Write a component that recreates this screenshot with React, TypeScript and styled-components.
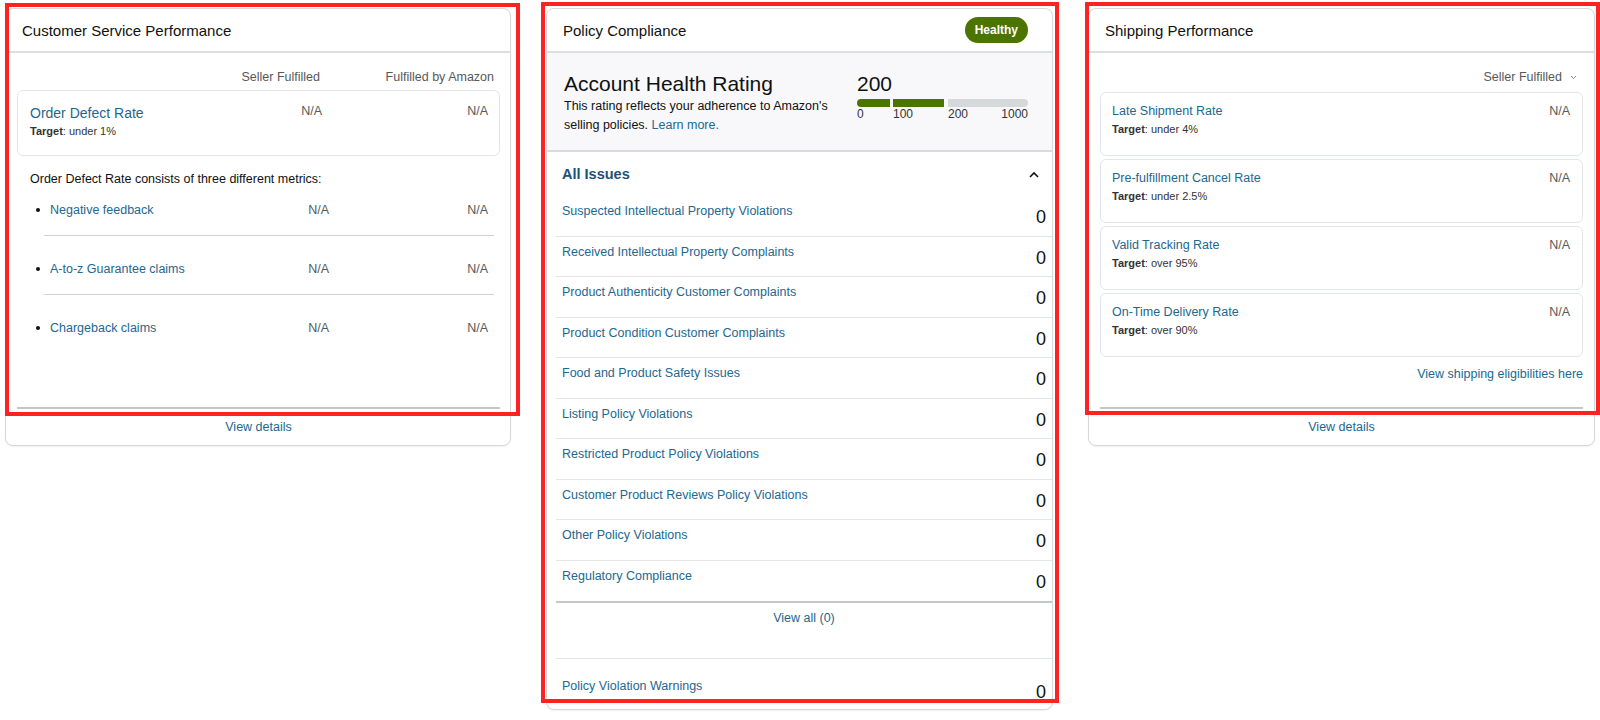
import React from "react";
import styled, { createGlobalStyle } from "styled-components";

const C = {
  text: "#0f1111",
  muted: "#565959",
  link: "#23678f",
  heading: "#1c5275",
  border: "#d5d9d9",
  line: "#e3e6e6",
  strong: "#c4c7c7",
  green: "#4c7400",
  red: "#ff2222",
};

const GlobalStyle = createGlobalStyle`
  html, body { margin: 0; padding: 0; background: #fff; }
  body { font-family: "Liberation Sans", Arial, sans-serif; color: ${C.text}; }
  * { box-sizing: border-box; }
  ul { margin: 0; padding: 0; list-style: none; }
`;

const Page = styled.div`
  position: relative;
  width: 1600px;
  height: 720px;
  overflow: hidden;
  display: grid;
  grid-template-columns: 506px 507px 507px;
  column-gap: 35px;
  align-items: start;
  padding: 8px 0 0 5px;
`;

const Annotation = styled.div`
  position: absolute;
  border: 4px solid ${C.red};
  pointer-events: none;
`;

const Card = styled.section<{ $h?: number }>`
  display: flex;
  flex-direction: column;
  background: #fff;
  border: 1px solid ${C.border};
  border-radius: 8px;
  box-shadow: 0 1px 2px rgba(15, 17, 17, 0.06);
  height: ${(p) => (p.$h ? `${p.$h}px` : "auto")};
  overflow: hidden;
`;

const CardHeader = styled.header`
  height: 44px;
  flex: none;
  display: flex;
  align-items: center;
  justify-content: space-between;
  padding: 0 24px 0 16px;
  border-bottom: 2px solid #dcdfdf;
  font-size: 15px;
  color: ${C.text};
`;

const Badge = styled.span`
  height: 26px;
  padding: 0 10px;
  border-radius: 13px;
  background: ${C.green};
  color: #fff;
  font-weight: 700;
  font-size: 12px;
  display: inline-flex;
  align-items: center;
`;

const Body = styled.div<{ $pl: number; $pr: number }>`
  flex: 1;
  display: flex;
  flex-direction: column;
  padding: 0 ${(p) => p.$pr}px 0 ${(p) => p.$pl}px;
`;

const ColHeads = styled.div`
  display: grid;
  grid-template-columns: 1fr auto 174px;
  padding: 16px 6px 0 0;
  margin-bottom: 5px;
  font-size: 12.5px;
  line-height: 16px;
  color: ${C.muted};
  text-align: right;
`;

const MetricBox = styled.div`
  display: grid;
  grid-template-columns: 1fr auto 166px;
  align-items: start;
  border: 1px solid ${C.line};
  border-radius: 6px;
  padding: 12px 11px 16px 12px;
`;

const MetricName = styled.div`
  display: flex;
  flex-direction: column;
`;

const BigLink = styled.a`
  font-size: 14px;
  line-height: 20px;
  color: ${C.link};
  text-decoration: none;
`;

const Target = styled.span`
  font-size: 11px;
  line-height: 16px;
  color: #333;
  b { font-weight: 700; }
`;

const Value = styled.span<{ $lh?: number }>`
  font-size: 12.5px;
  line-height: ${(p) => p.$lh ?? 18}px;
  color: ${C.muted};
  text-align: right;
`;

const Description = styled.p`
  margin: 14px 0 0;
  padding-left: 13px;
  font-size: 12.5px;
  line-height: 18px;
  color: ${C.text};
`;

const SubMetric = styled.li`
  position: relative;
  display: grid;
  grid-template-columns: 1fr auto 159px;
  margin: 0 6px 0 27px;
  padding: 24px 6px 16px 6px;
  border-bottom: 1px solid #cfd2d2;
  &:first-child { padding-top: 13px; }
  &:last-child { border-bottom: none; }
  &::before {
    content: "";
    position: absolute;
    left: -8px;
    width: 4px;
    height: 4px;
    border-radius: 50%;
    background: ${C.text};
    top: 31px;
  }
  &:first-child::before { top: 20px; }
`;

const SmallLink = styled.a`
  font-size: 12.5px;
  line-height: 18px;
  color: ${C.link};
  text-decoration: none;
`;

const Spacer = styled.div`
  flex: 1;
`;

const Footer = styled.div<{ $ml: number; $mr: number }>`
  flex: none;
  height: 38px;
  margin: 0 ${(p) => p.$mr}px 0 ${(p) => p.$ml}px;
  border-top: 2px solid ${C.strong};
  display: flex;
  align-items: center;
  justify-content: center;
`;

/* Shipping */
const SelectRow = styled.div`
  display: flex;
  justify-content: flex-end;
  align-items: center;
  gap: 8px;
  padding: 16px 6px 0 0;
  margin-bottom: 7px;
  font-size: 12.5px;
  line-height: 16px;
  color: ${C.muted};
`;

const ShipList = styled.div`
  display: flex;
  flex-direction: column;
  gap: 3px;
`;

const ShipBox = styled.div`
  height: 64px;
  display: grid;
  grid-template-columns: 1fr auto;
  align-items: start;
  border: 1px solid ${C.line};
  border-radius: 6px;
  padding: 9px 12px 0 11px;
`;

const ShipName = styled.div`
  display: flex;
  flex-direction: column;
  gap: 1px;
`;

const EligRow = styled.div`
  margin-top: 8px;
  display: flex;
  justify-content: flex-end;
`;

/* Policy */
const RatingPanel = styled.div`
  flex: none;
  height: 99px;
  display: flex;
  justify-content: space-between;
  align-items: flex-start;
  padding: 18px 24px 0 17px;
  background: #f8f8fb;
  border-bottom: 2px solid #d9dcdc;
`;

const RatingText = styled.div`
  width: 268px;
`;

const RatingTitle = styled.h2`
  margin: 0;
  font-size: 21px;
  line-height: 26px;
  font-weight: 400;
  color: ${C.text};
`;

const RatingLine = styled.span`
  display: block;
  font-size: 12.5px;
  line-height: 18.5px;
  color: ${C.text};
  white-space: nowrap;
`;

const InlineLink = styled.a`
  color: ${C.link};
  text-decoration: none;
`;

const Score = styled.div`
  width: 171px;
  display: flex;
  flex-direction: column;
`;

const ScoreValue = styled.div`
  font-size: 21px;
  line-height: 26px;
  color: ${C.text};
`;

const Bar = styled.div`
  display: flex;
  gap: 3px;
  height: 8px;
  margin-top: 2px;
`;

const Segment = styled.div<{ $w?: number; $on?: boolean }>`
  flex: ${(p) => (p.$w ? `0 0 ${p.$w}px` : "1")};
  background: ${(p) => (p.$on ? C.green : "#d5d9d9")};
  &:first-child { border-radius: 4px 0 0 4px; }
  &:last-child { border-radius: 0 4px 4px 0; margin-left: 1px; }
`;

const Scale = styled.div`
  display: flex;
  font-size: 12px;
  line-height: 14px;
  color: #333;
`;

const Tick = styled.span<{ $w?: number }>`
  flex: ${(p) => (p.$w ? `0 0 ${p.$w}px` : "1")};
  display: flex;
  justify-content: space-between;
`;

const IssuesHead = styled.div`
  flex: none;
  display: flex;
  justify-content: space-between;
  align-items: center;
  padding: 12px 13px 12px 15px;
  font-size: 14.5px;
  line-height: 20px;
  font-weight: 700;
  color: ${C.heading};
`;

const IssueList = styled.ul`
  margin-left: 9px;
`;

const IssueRow = styled.li<{ $tall?: boolean }>`
  display: grid;
  grid-template-columns: 1fr auto;
  align-items: start;
  height: ${(p) => (p.$tall ? "50px" : "40.5px")};
  padding: 0 6px;
  border-bottom: 1px solid ${C.line};
  &:last-child { border-bottom: none; }
`;

const IssueLabel = styled.a<{ $pt: number }>`
  padding-top: ${(p) => p.$pt}px;
  font-size: 12.5px;
  line-height: 18px;
  color: ${C.link};
  text-decoration: none;
`;

const Count = styled.span<{ $pt: number }>`
  padding-top: ${(p) => p.$pt}px;
  font-size: 18px;
  line-height: 24px;
  color: ${C.text};
`;

const ViewAll = styled.div`
  margin-left: 9px;
  border-top: 2px solid ${C.strong};
  border-bottom: 1px solid ${C.line};
  padding: 6px 0 31px;
  display: flex;
  justify-content: center;
`;

const Chevron = ({ up }: { up?: boolean }) =>
  up ? (
    <svg width="10" height="7" viewBox="0 0 10 7" aria-hidden>
      <polyline points="1,6 5,2 9,6" fill="none" stroke="#0f1111" strokeWidth="1.6" />
    </svg>
  ) : (
    <svg width="7" height="5" viewBox="0 0 7 5" aria-hidden>
      <polyline points="1,1 3.5,3.5 6,1" fill="none" stroke="#8a8d8d" strokeWidth="1" />
    </svg>
  );

const subMetrics = ["Negative feedback", "A-to-z Guarantee claims", "Chargeback claims"];

const shipping = [
  { name: "Late Shipment Rate", target: "under 4%" },
  { name: "Pre-fulfillment Cancel Rate", target: "under 2.5%" },
  { name: "Valid Tracking Rate", target: "over 95%" },
  { name: "On-Time Delivery Rate", target: "over 90%" },
];

const issues = [
  "Suspected Intellectual Property Violations",
  "Received Intellectual Property Complaints",
  "Product Authenticity Customer Complaints",
  "Product Condition Customer Complaints",
  "Food and Product Safety Issues",
  "Listing Policy Violations",
  "Restricted Product Policy Violations",
  "Customer Product Reviews Policy Violations",
  "Other Policy Violations",
  "Regulatory Compliance",
];

export default function App() {
  return (
    <>
      <GlobalStyle />
      <Page>
        <Card $h={438}>
          <CardHeader>Customer Service Performance</CardHeader>
          <Body $pl={11} $pr={10}>
            <ColHeads>
              <span />
              <span>Seller Fulfilled</span>
              <span>Fulfilled by Amazon</span>
            </ColHeads>
            <MetricBox>
              <MetricName>
                <BigLink>Order Defect Rate</BigLink>
                <Target>
                  <b>Target</b>: under 1%
                </Target>
              </MetricName>
              <Value $lh={16}>N/A</Value>
              <Value $lh={16}>N/A</Value>
            </MetricBox>
            <Description>Order Defect Rate consists of three different metrics:</Description>
            <ul>
              {subMetrics.map((m) => (
                <SubMetric key={m}>
                  <SmallLink>{m}</SmallLink>
                  <Value>N/A</Value>
                  <Value>N/A</Value>
                </SubMetric>
              ))}
            </ul>
            <Spacer />
          </Body>
          <Footer $ml={11} $mr={10}>
            <SmallLink>View details</SmallLink>
          </Footer>
        </Card>

        <Card>
          <CardHeader>
            Policy Compliance
            <Badge>Healthy</Badge>
          </CardHeader>
          <RatingPanel>
            <RatingText>
              <RatingTitle>Account Health Rating</RatingTitle>
              <RatingLine>This rating reflects your adherence to Amazon's</RatingLine>
              <RatingLine>
                selling policies. <InlineLink>Learn more.</InlineLink>
              </RatingLine>
            </RatingText>
            <Score>
              <ScoreValue>200</ScoreValue>
              <Bar>
                <Segment $w={33} $on />
                <Segment $w={51} $on />
                <Segment />
              </Bar>
              <Scale>
                <Tick $w={36}>0</Tick>
                <Tick $w={55}>100</Tick>
                <Tick>
                  <span>200</span>
                  <span>1000</span>
                </Tick>
              </Scale>
            </Score>
          </RatingPanel>
          <IssuesHead>
            All Issues
            <Chevron up />
          </IssuesHead>
          <IssueList>
            {issues.map((i) => (
              <IssueRow key={i}>
                <IssueLabel $pt={6}>{i}</IssueLabel>
                <Count $pt={9}>0</Count>
              </IssueRow>
            ))}
          </IssueList>
          <ViewAll>
            <SmallLink>View all (0)</SmallLink>
          </ViewAll>
          <IssueList>
            <IssueRow $tall>
              <IssueLabel $pt={18}>Policy Violation Warnings</IssueLabel>
              <Count $pt={21}>0</Count>
            </IssueRow>
          </IssueList>
        </Card>

        <Card $h={438}>
          <CardHeader>Shipping Performance</CardHeader>
          <Body $pl={11} $pr={11}>
            <SelectRow>
              Seller Fulfilled
              <Chevron />
            </SelectRow>
            <ShipList>
              {shipping.map((s) => (
                <ShipBox key={s.name}>
                  <ShipName>
                    <SmallLink>{s.name}</SmallLink>
                    <Target>
                      <b>Target</b>: {s.target}
                    </Target>
                  </ShipName>
                  <Value>N/A</Value>
                </ShipBox>
              ))}
            </ShipList>
            <EligRow>
              <SmallLink>View shipping eligibilities here</SmallLink>
            </EligRow>
            <Spacer />
          </Body>
          <Footer $ml={11} $mr={11}>
            <SmallLink>View details</SmallLink>
          </Footer>
        </Card>

        <Annotation style={{ left: 5, top: 3, width: 515, height: 413 }} />
        <Annotation style={{ left: 541, top: 2, width: 518, height: 701 }} />
        <Annotation style={{ left: 1085, top: 2, width: 515, height: 413 }} />
      </Page>
    </>
  );
}
